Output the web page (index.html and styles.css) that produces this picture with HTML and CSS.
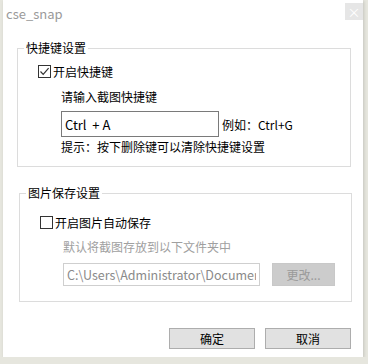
FILE: index.html
```html
<!DOCTYPE html>
<html lang="zh-CN">

<head>
    <meta charset="UTF-8">
    <title>cse_snap</title>
    <link rel="stylesheet" href="styles.css">
</head>

<body>
    <div class="dialog">
        <div class="dialog-title">
            <span class="title-text">cse_snap</span>
            <a class="close-btn" href="javascript:;">&times;</a>
        </div>

        <fieldset class="group group-hotkey">
            <legend>快捷键设置</legend>
            <label class="check-row">
                <span class="check-box checked">
                    <svg width="11" height="11" viewBox="0 0 11 11"><path d="M1.5 5.5 L4.2 8.3 L9.6 2.2" fill="none" stroke="#333" stroke-width="1.2"/></svg>
                </span>
                开启快捷键
            </label>
            <div class="sub-text">请输入截图快捷键</div>
            <div class="input-row">
                <input type="text" class="hotkey-input" value="Ctrl  + A">
                <span class="example">例如：Ctrl+G</span>
            </div>
            <div class="sub-text tip">提示：按下删除键可以清除快捷键设置</div>
        </fieldset>

        <fieldset class="group group-save">
            <legend>图片保存设置</legend>
            <label class="check-row">
                <span class="check-box"></span>
                开启图片自动保存
            </label>
            <div class="sub-text disabled">默认将截图存放到以下文件夹中</div>
            <div class="path-row">
                <input type="text" class="path-input" value="C:\Users\Administrator\Documents\cse_snap" disabled>
                <button class="change-btn" disabled>更改...</button>
            </div>
        </fieldset>

        <div class="dialog-footer">
            <button class="btn">确定</button>
            <button class="btn">取消</button>
        </div>
    </div>
</body>

</html>
```

FILE: styles.css
```css
body {
    margin: 0px;
    padding: 0px;
    background-color: #e6e6de;
    font-family: "Noto Sans CJK SC", "Noto Sans", sans-serif;
    font-size: 12px;
    color: #000;
}

.dialog {
    width: 360px;
    height: 357px;
    margin-left: 3px;
    background-color: #fff;
    box-shadow: 1px 1px 3px rgba(0, 0, 0, .15);
    overflow: hidden;
}

.dialog-title {
    height: 28px;
    display: flex;
    justify-content: space-between;
}

.title-text {
    padding: 6px 0px 0px 3px;
    line-height: 16px;
    font-size: 13px;
    color: #9a9a9a;
}

.close-btn {
    width: 18px;
    height: 17px;
    margin-top: 3px;
    background-color: #e6e6e6;
    color: #fff;
    text-align: center;
    line-height: 17px;
    font-size: 13px;
    text-decoration: none;
}

.group {
    margin: 12px 12px 0px 14px;
    padding: 0px 0px 11px 0px;
    border: 1px solid #dcdcdc;
    min-width: 0;
}

.group legend {
    margin-left: 6px;
    padding: 0px 2px;
    line-height: 16px;
}

.group-save {
    margin: 18px 11px 0px 16px;
    padding-bottom: 15px;
}

.check-row {
    display: flex;
    align-items: center;
    height: 16px;
    margin: 7px 0px 0px 20px;
}

.group-save .check-row {
    margin-top: 13px;
}

.check-box {
    width: 11px;
    height: 11px;
    border: 1px solid #333;
    margin-right: 2px;
    display: flex;
}

.sub-text {
    margin: 10px 0px 0px 43px;
    line-height: 16px;
}

.sub-text.tip {
    margin-top: 2px;
}

.sub-text.disabled {
    margin-top: 9px;
    color: #a0a0a0;
}

.input-row {
    display: flex;
    align-items: center;
    margin: 6px 0px 0px 43px;
}

.hotkey-input {
    box-sizing: border-box;
    width: 158px;
    height: 26px;
    margin: 0px;
    padding: 0px 3px;
    border: 1px solid #7a7a7a;
    font-family: "Noto Sans CJK SC", "Noto Sans", sans-serif;
    font-size: 13px;
    color: #000;
    outline: none;
}

.example {
    margin-left: 3px;
    font-size: 12px;
}

.path-row {
    display: flex;
    margin: 8px 0px 0px 43px;
}

.path-input {
    box-sizing: border-box;
    width: 197px;
    height: 23px;
    margin: 0px;
    padding: 0px 3px;
    border: 1px solid #cfcfcf;
    background-color: #fff;
    font-family: "Noto Sans CJK SC", "Noto Sans", sans-serif;
    font-size: 12.5px;
    color: #8a8a8a;
}

.change-btn {
    width: 63px;
    height: 23px;
    margin-left: 12px;
    padding: 0px;
    border: 1px solid #c8c8c8;
    background-color: #cccccc;
    font-family: "Noto Sans CJK SC", "Noto Sans", sans-serif;
    font-size: 12px;
    color: #9a9a9a;
}

.dialog-footer {
    display: flex;
    justify-content: flex-end;
    gap: 10px;
    margin: 26px 12px 0px 0px;
}

.btn {
    width: 86px;
    height: 21px;
    padding: 0px;
    border: 1px solid #adadad;
    background-color: #e1e1e1;
    font-family: "Noto Sans CJK SC", "Noto Sans", sans-serif;
    font-size: 12px;
    color: #000;
}
```
